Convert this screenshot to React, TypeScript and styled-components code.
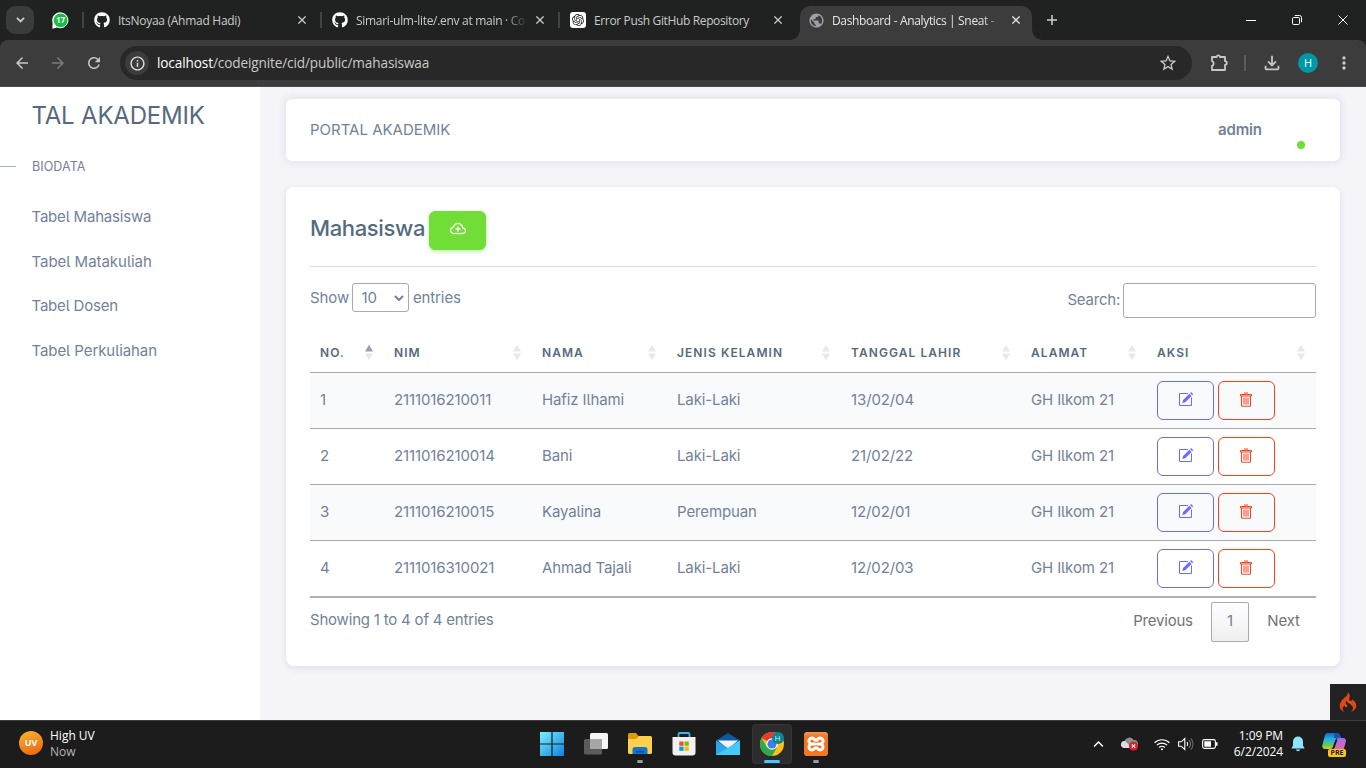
import React from "react";
import styled, { createGlobalStyle, css } from "styled-components";
import { FaGithub } from "react-icons/fa";
import { SiOpenai, SiCodeigniter } from "react-icons/si";
import {
  MdArrowBack,
  MdArrowForward,
  MdRefresh,
  MdInfoOutline,
  MdStarBorder,
  MdOutlineFileDownload,
  MdMoreVert,
  MdPublic,
} from "react-icons/md";
import { BsCloudPlus } from "react-icons/bs";

const pageFont = `Inter, "Liberation Sans", sans-serif`;
const systemFont = `"Open Sans", "Noto Sans", sans-serif`;

const GlobalStyle = createGlobalStyle`
  *, *::before, *::after { box-sizing: border-box; }
  body { margin: 0; overflow: hidden; background: #1c1c1c; }
`;

const Screen = styled.div`
  width: 1366px;
  height: 768px;
  display: flex;
  flex-direction: column;
  overflow: hidden;
`;

/* ---------- browser ---------- */

const TabStrip = styled.div`
  height: 40px;
  flex: none;
  display: flex;
  align-items: center;
  background: #202221;
  color: #c9cbca;
  font: 12px ${systemFont};
`;

const TabSearch = styled.div`
  width: 28px;
  height: 28px;
  margin-left: 6px;
  border-radius: 9px;
  background: #3a3b3b;
  display: flex;
  align-items: center;
  justify-content: center;
`;

const PinnedTab = styled.div`
  width: 48px;
  display: flex;
  justify-content: center;
  padding-left: 4px;
`;

const TabDivider = styled.i`
  width: 2px;
  height: 16px;
  background: #414342;
`;

const Tab = styled.div<{ $width: number; $active?: boolean }>`
  width: ${(p) => p.$width}px;
  height: 40px;
  display: flex;
  align-items: center;
  gap: 8px;
  padding: 0 14px 0 10px;
  svg { flex: none; }
  ${(p) =>
    p.$active &&
    css`
      position: relative;
      height: 34px;
      margin-top: 6px;
      padding: 0 12px 6px 8px;
      gap: 7px;
      border-radius: 10px 10px 0 0;
      background: #3c3c3c;
      color: #e6e6e6;
      &::before, &::after {
        content: "";
        position: absolute;
        bottom: 0;
        width: 10px;
        height: 10px;
      }
      &::before { left: -10px; background: radial-gradient(circle at 0 0, transparent 9.5px, #3c3c3c 10px); }
      &::after { right: -10px; background: radial-gradient(circle at 100% 0, transparent 9.5px, #3c3c3c 10px); }
    `}
`;

const TabTitle = styled.span<{ $spacing: number; $fade?: boolean }>`
  flex: 1;
  padding-top: 1px;
  white-space: nowrap;
  letter-spacing: ${(p) => p.$spacing}px;
  line-height: 20px;
  ${(p) => p.$fade && css`mask-image: linear-gradient(90deg, #000 calc(100% - 24px), transparent);`}
`;

const WhiteTile = styled.span`
  width: 16px;
  height: 16px;
  border-radius: 3px;
  background: #fff;
  color: #222;
  display: flex;
  align-items: center;
  justify-content: center;
  flex: none;
`;

const NewTab = styled.div`
  width: 40px;
  display: flex;
  justify-content: center;
`;

const WindowButtons = styled.div`
  margin-left: auto;
  display: flex;
  color: #fff;
`;

const WindowButton = styled.div`
  width: 46px;
  display: flex;
  justify-content: center;
`;

const ToolbarBack = styled.div`
  flex: none;
  background: #202221;
`;

const Toolbar = styled.div`
  height: 47px;
  display: flex;
  align-items: center;
  background: #3c3c3c;
  border-bottom: 1px solid #4a4a4a;
  border-radius: 8px 8px 0 0;
  color: #c7c7c7;
`;

const NavIcons = styled.div`
  width: 120px;
  padding-left: 13px;
  display: flex;
  gap: 18px;
`;

const DimIcon = styled.span`
  display: flex;
  color: #7a7a7a;
`;

const AddressBar = styled.div`
  width: 1072px;
  height: 34px;
  border-radius: 17px;
  background: #282828;
  padding: 0 14px 0 5px;
  display: flex;
  align-items: center;
`;

const SiteInfo = styled.div`
  width: 24px;
  height: 24px;
  border-radius: 12px;
  background: #3c3c3c;
  display: flex;
  align-items: center;
  justify-content: center;
  color: #dedede;
`;

const Url = styled.div`
  flex: 1;
  margin-left: 8px;
  padding-bottom: 1px;
  font: 13.6px ${systemFont};
  letter-spacing: -0.12px;
  color: #c9c9c9;
  b { font-weight: 400; color: #fff; }
`;

const ToolbarActions = styled.div`
  flex: 1;
  display: flex;
  align-items: center;
  padding-left: 17px;
`;

const ToolbarDivider = styled.i`
  width: 2px;
  height: 16px;
  margin: 0 15px 0 15px;
  background: #5c5c5c;
`;

const Avatar = styled.div`
  width: 20px;
  height: 20px;
  margin: 0 16px 0 15px;
  border-radius: 50%;
  background: #0097a7;
  color: #fff;
  font: 11px/20px ${systemFont};
  text-align: center;
`;

/* ---------- page ---------- */

const Page = styled.div`
  position: relative;
  height: 633px;
  flex: none;
  display: flex;
  overflow: hidden;
  background: #f4f4f9;
  font-family: ${pageFont};
  font-size: 15px;
  font-feature-settings: "cv05";
  letter-spacing: -0.1px;
  color: #71829a;
`;

const Sidebar = styled.aside`
  width: 260px;
  background: #fff;
  display: flex;
  flex-direction: column;
`;

const Brand = styled.div`
  margin: 14px 0 0 31.5px;
  height: 30px;
  white-space: nowrap;
  font-size: 24px;
  line-height: 30px;
  letter-spacing: -0.2px;
  color: #566a7f;
`;

const MenuHeader = styled.div`
  height: 20px;
  margin: 25px 0 29px;
  display: flex;
  align-items: center;
  gap: 16px;
  font-size: 12.5px;
  letter-spacing: 0.08px;
  &::before {
    content: "";
    width: 16px;
    height: 1px;
    background: #a3afbb;
  }
`;

const MenuItem = styled.a<{ $spacing: number }>`
  height: 44.6px;
  padding-left: 31.5px;
  line-height: 24px;
  letter-spacing: ${(p) => p.$spacing}px;
  &:nth-of-type(2) { line-height: 23px; }
`;

const Main = styled.main`
  flex: 1;
  padding: 12px 26px 0;
  display: flex;
  flex-direction: column;
  gap: 26px;
`;

const Navbar = styled.header`
  height: 62px;
  padding: 0 24px 2px;
  border-radius: 6px;
  background: #fff;
  box-shadow: 0 0 6px 3px rgba(67, 89, 113, 0.07);
  display: flex;
  align-items: center;
  justify-content: space-between;
  letter-spacing: 0;
`;

const User = styled.div`
  position: relative;
  width: 98px;
  font-weight: 600;
  letter-spacing: -0.15px;
  &::after {
    content: "";
    position: absolute;
    left: 79px;
    top: 21px;
    width: 8px;
    height: 8px;
    border-radius: 50%;
    background: #71dd37;
  }
`;

const Card = styled.section`
  height: 479px;
  padding: 24px;
  border-radius: 8px;
  background: #fff;
  box-shadow: 0 2px 6px rgba(67, 89, 113, 0.12);
`;

const CardTitle = styled.div`
  height: 56px;
  display: flex;
  align-items: flex-start;
  gap: 5px;
  border-bottom: 1px solid #d4dbe1;
`;

const Heading = styled.h4`
  width: 114px;
  margin: 0;
  font-size: 22px;
  font-weight: 450;
  line-height: 35px;
  letter-spacing: -0.36px;
  color: #566a7f;
`;

const Button = styled.button<{ $tone: "success" | "primary" | "danger" }>`
  width: 57px;
  height: 39px;
  padding: 0 0 3px;
  display: flex;
  align-items: center;
  justify-content: center;
  border-radius: 6px;
  border: 1px solid;
  background: transparent;
  ${(p) => p.$tone === "success" && css`background: #71dd37; border-color: #71dd37; color: #fff; box-shadow: 0 2px 4px rgba(113, 221, 55, 0.4);`}
  ${(p) => p.$tone === "primary" && css`color: #696cff;`}
  ${(p) => p.$tone === "danger" && css`color: #ff3e1d;`}
`;

const Controls = styled.div`
  height: 66px;
  padding-top: 16px;
  display: flex;
  justify-content: space-between;
`;

const ControlLabel = styled.label<{ $gap: number; $height: number }>`
  height: ${(p) => p.$height}px;
  display: flex;
  align-items: center;
  gap: ${(p) => p.$gap}px;
`;

const SearchText = styled.span`
  padding-bottom: 2px;
  letter-spacing: -0.22px;
`;

const LengthSelect = styled.span`
  width: 57px;
  height: 29px;
  padding: 0 4px 0 8px;
  border: 1px solid #aaa;
  border-radius: 3px;
  display: flex;
  align-items: center;
  justify-content: space-between;
`;

const SearchInput = styled.input`
  width: 193px;
  height: 35px;
  border: 1px solid #aaa;
  border-radius: 3px;
  background: transparent;
`;

const Table = styled.table`
  width: 1006px;
  table-layout: fixed;
  border-collapse: separate;
  border-spacing: 0;
  border-bottom: 2px solid #b0b0b0;
`;

const HeadCell = styled.th`
  height: 40px;
  padding: 0 10px;
  border-bottom: 1px solid #aaa;
  text-align: left;
  font-size: 12px;
  font-weight: 600;
  letter-spacing: 1.07px;
  color: #566a7f;
`;

const HeadContent = styled.div`
  display: flex;
  align-items: center;
  justify-content: space-between;
`;

const BodyRow = styled.tr`
  &:nth-child(odd) { background: #f9fafc; }
  &:not(:last-child) td { height: 56px; border-bottom: 1px solid #aaa; }
`;

const Cell = styled.td`
  height: 55px;
  padding: 0 10px 2px;
  letter-spacing: -0.12px;
  white-space: nowrap;
`;

const ActionCell = styled(Cell)`
  padding: 0 10px;
`;

const Actions = styled.div`
  display: flex;
  gap: 4px;
`;

const TableFooter = styled.div`
  height: 44px;
  padding-top: 4px;
  display: flex;
  justify-content: space-between;
  line-height: 36px;
  letter-spacing: -0.2px;
`;

const Pager = styled.div`
  display: flex;
  line-height: 38px;
  color: #737373;
`;

const PageLink = styled.a<{ $current?: boolean; $width: number }>`
  width: ${(p) => p.$width}px;
  height: 40px;
  text-align: center;
  &:last-child { padding-left: 2px; }
  ${(p) =>
    p.$current &&
    css`
      border: 1px solid #aaa;
      border-radius: 2px;
      line-height: 36px;
      color: #71829a;
      background: linear-gradient(#fff, #eee);
    `}
`;

const DebugBadge = styled.div`
  position: absolute;
  right: 0;
  bottom: 0;
  width: 36px;
  height: 36px;
  background: #222;
  color: #dd4814;
  display: flex;
  align-items: center;
  justify-content: center;
`;

/* ---------- taskbar ---------- */

const Taskbar = styled.footer`
  height: 48px;
  flex: none;
  display: flex;
  align-items: center;
  padding-bottom: 1px;
  background: #1c1c1c;
  border-top: 1px solid #3c3c3c;
  color: #fff;
  font: 12px/16px ${systemFont};
`;

const Weather = styled.div`
  width: 528px;
  padding-left: 19px;
  display: flex;
  align-items: center;
  gap: 7px;
  small { display: block; font-size: 12px; color: #b5b5b5; }
`;

const UvBadge = styled.div`
  width: 24px;
  height: 24px;
  margin-bottom: 2px;
  border-radius: 50%;
  background: linear-gradient(160deg, #f6b52c, #ee5f10);
  font: 700 9px/24px ${systemFont};
  text-align: center;
`;

const AppSlot = styled.div<{ $active?: boolean; $running?: boolean }>`
  position: relative;
  width: 40px;
  height: 40px;
  margin: 0 2px;
  border-radius: 4px;
  display: flex;
  align-items: center;
  justify-content: center;
  ${(p) => p.$active && css`background: #2c2c2c; box-shadow: inset 0 0 0 1px #333;`}
  ${(p) =>
    (p.$active || p.$running) &&
    css`
      &::after {
        content: "";
        position: absolute;
        bottom: 1px;
        width: ${p.$active ? 16 : 6}px;
        height: 3px;
        border-radius: 2px;
        background: ${p.$active ? "#4cc2ff" : "#9a9a9a"};
      }
    `}
`;

const Apps = styled.div`
  display: flex;
  margin-left: 1.5px;
`;

const ChromeUser = styled.span`
  position: absolute;
  right: 8px;
  top: 8px;
  width: 12px;
  height: 12px;
  border-radius: 50%;
  background: #0a8794;
  color: #d8f2f4;
  font: 8px/12px ${systemFont};
  text-align: center;
`;

const XamppTile = styled.span`
  width: 24px;
  height: 24px;
  border-radius: 3px;
  background: linear-gradient(#f59a5c, #f37623 4px);
  display: flex;
  align-items: center;
  justify-content: center;
`;

const Tray = styled.div`
  margin-left: auto;
  display: flex;
  align-items: center;
`;

const TrayItem = styled.span<{ $width: number }>`
  width: ${(p) => p.$width}px;
  display: flex;
  justify-content: center;
`;

const Clock = styled.div`
  width: 58px;
  padding-right: 1px;
  text-align: right;
  letter-spacing: -0.1px;
`;

const CopilotIcon = styled.span`
  position: relative;
  width: 24px;
  height: 24px;
  margin: 0 20px 0 10px;
`;

const PreBadge = styled.b`
  position: absolute;
  left: 6px;
  bottom: -1px;
  width: 18px;
  height: 8px;
  border-radius: 2px;
  background: #fdc70c;
  color: #222;
  font: 700 7px/8px ${systemFont};
  text-align: center;
`;

/* ---------- drawings ---------- */

const Chevron = ({ up, width = 10, stroke = 1.8 }: { up?: boolean; width?: number; stroke?: number }) => (
  <svg width={width} height={width * 0.6} viewBox="0 0 10 6" fill="none" stroke="currentColor" strokeWidth={stroke}>
    <path d={up ? "M1 5l4-4 4 4" : "M1 1l4 4 4-4"} />
  </svg>
);

const Cross = ({ size = 8, stroke = 1.6 }: { size?: number; stroke?: number }) => (
  <svg width={size} height={size} viewBox="0 0 10 10" fill="none" stroke="currentColor" strokeWidth={stroke}>
    <path d="M.5.5l9 9M9.5.5l-9 9" />
  </svg>
);

const ChatIcon = () => (
  <svg width="17" height="17" viewBox="0 0 17 17">
    <path d="M8.7.3a8 8 0 1 1-3.8 15.2L.4 16.7l.2-6A8 8 0 0 1 8.7.3z" fill="#fff" />
    <circle cx="8.6" cy="8.3" r="6.9" fill="#12c245" />
    <text x="8.5" y="11.3" fontSize="8" fontWeight="700" fontFamily="Open Sans" fill="#fff" textAnchor="middle">17</text>
  </svg>
);

const PuzzleIcon = () => (
  <svg width="20" height="20" viewBox="0 0 20 20" fill="none" stroke="currentColor" strokeWidth="1.8" strokeLinejoin="round">
    <path d="M3 4h4.600a1.700 1.700 0 0 1 3.400 0H16v4.200a1.800 1.800 0 0 1 0 3.600V17H3v-4.200a2.400 2.400 0 0 0 0-4.600z" />
  </svg>
);

const EditIcon = () => (
  <svg width="16" height="16" viewBox="0 0 16 16" fill="none" stroke="currentColor">
    <path d="M10 2.500H1.500v12H13.500V6.500" strokeWidth="1" />
    <path d="M4.300 12l.8-3 6.300-6.300 2.200 2.200L7.300 11.200z" fill="currentColor" stroke="none" />
    <path d="M12 2.100l1-1 2.200 2.200-1 1z" fill="currentColor" stroke="none" />
  </svg>
);

const TrashIcon = () => (
  <svg width="15" height="15" viewBox="0 0 15 15" fill="none" stroke="currentColor" strokeWidth="1">
    <path d="M1.500 2.500h11v1.500h-11zM5 1h4M2.500 4v10.200h9V4M5 5.500v7M7 5.500v7M9 5.500v7" />
  </svg>
);

const SortIcon = ({ ascending }: { ascending?: boolean }) => (
  <svg width="10" height="17" viewBox="0 0 10 17">
    <path d="M1 7.500L5 .8l4 6.700z" fill={ascending ? "#93a0ae" : "#e6e8ec"} />
    <path d="M1 9.500l4 6.700 4-6.700z" fill="#e6e8ec" />
  </svg>
);

const WindowsIcon = () => (
  <svg width="24" height="24" viewBox="0 0 24 24">
    <defs>
      <linearGradient id="win" x1="0" y1="0" x2="1" y2="1">
        <stop offset="0" stopColor="#7ceefc" />
        <stop offset="1" stopColor="#0a84e0" />
      </linearGradient>
    </defs>
    <path d="M0 0h11.400v11.400H0zM12.600 0H24v11.400H12.600zM0 12.600h11.400V24H0zM12.600 12.600H24V24H12.600z" fill="url(#win)" />
  </svg>
);

const TaskViewIcon = () => (
  <svg width="24" height="24" viewBox="0 0 24 24">
    <rect x="6" y="1" width="18" height="16" rx="1.500" fill="#f4f4f4" />
    <rect x="0" y="7" width="18" height="15.500" rx="1.500" fill="#5c5c5c" />
    <path d="M6 7h12v10H6z" fill="#a6a6a6" />
  </svg>
);

const FolderIcon = () => (
  <svg width="24" height="24" viewBox="0 0 24 24">
    <path d="M0 2.500A1.500 1.500 0 0 1 1.500 1H8l2.500 3H22v8H0z" fill="#dc9a0c" />
    <path d="M0 7h8l3-3h11.500A1.500 1.500 0 0 1 24 5.500v15a1.500 1.500 0 0 1-1.500 1.500h-21A1.500 1.500 0 0 1 0 20.500z" fill="#fccf4d" />
    <path d="M4.500 22v-4.500a2.500 2.500 0 0 1 2.500-2.500h10a2.500 2.500 0 0 1 2.500 2.500V22z" fill="#1275cc" />
    <path d="M8 19h8v1.500H8z" fill="#0a4f94" />
  </svg>
);

const StoreIcon = () => (
  <svg width="24" height="24" viewBox="0 0 24 24">
    <path d="M6.500 6V2.200A1.200 1.200 0 0 1 7.700 1h8.600a1.200 1.200 0 0 1 1.200 1.200V6" fill="none" stroke="#35b5e8" strokeWidth="1.800" />
    <path d="M.5 5h23v15.500A3 3 0 0 1 20.500 23.500h-17A3 3 0 0 1 .5 20.500z" fill="#f1f1f1" />
    <path d="M7.300 9.500h4.300v4.300H7.300z" fill="#f25022" />
    <path d="M12.500 9.500h4.300v4.300h-4.300z" fill="#7fba00" />
    <path d="M7.300 14.600h4.300v4.300H7.300z" fill="#00a4ef" />
    <path d="M12.500 14.600h4.300v4.300h-4.300z" fill="#ffb900" />
  </svg>
);

const MailIcon = () => (
  <svg width="24" height="24" viewBox="0 0 24 24">
    <path d="M0 8.500L12 1l12 7.500v5H0z" fill="#0c59a4" />
    <path d="M2 8.500h20L12 17z" fill="#f3f3f3" />
    <path d="M0 8.500L12 16l12-7.500V23H0z" fill="#2aa8ea" />
    <path d="M24 8.500V23H0z" fill="#46c8f8" />
  </svg>
);

const ChromeIcon = () => (
  <svg width="24" height="24" viewBox="0 0 24 24">
    <circle cx="12" cy="12" r="12" fill="#fbc116" />
    <path d="M12 12L1.600 6A12 12 0 0 1 22.400 6z" fill="#e33b2e" />
    <path d="M1.600 6A12 12 0 0 0 12 24l5.200-9L6.800 15z" fill="#2da94f" />
    <path d="M12 6h10.400L12 12z" fill="#e33b2e" />
    <circle cx="12" cy="12" r="5.800" fill="#fff" />
    <circle cx="12" cy="12" r="4.600" fill="#3f7de8" />
  </svg>
);

const XamppMark = () => (
  <svg width="20" height="18" viewBox="0 0 20 18" fill="none" stroke="#fff" strokeWidth="3" strokeLinejoin="round" strokeLinecap="round">
    <path d="M9 9H5.500a3 3 0 1 1 3-4.500c.5 1 2.500 1 3 0a3 3 0 1 1 3 4.500 3 3 0 1 1-3 4.500c-.5-1-2.500-1-3 0a3 3 0 1 1-3-4.500M11.500 9h3" />
  </svg>
);

const CloudErrorIcon = () => (
  <svg width="18" height="14" viewBox="0 0 18 14">
    <path d="M4 11a3.600 3.600 0 0 1-.5-7A5 5 0 0 1 12.500 3a4 4 0 0 1 1 8z" fill="#8f8f8f" />
    <path d="M3 11a3.500 3.500 0 0 1 1-7l7 7z" fill="#dedede" />
    <circle cx="12.500" cy="9" r="4.600" fill="#d9222f" />
    <path d="M10.800 7.300l3.400 3.400M14.200 7.300l-3.400 3.400" stroke="#fff" strokeWidth="1.100" />
  </svg>
);

const WifiIcon = () => (
  <svg width="16" height="13" viewBox="0 0 16 13" fill="none" stroke="#fff" strokeWidth="1.200">
    <path d="M.6 4.800a10.500 10.500 0 0 1 14.800 0M2.900 7.200a7.200 7.200 0 0 1 10.200 0M5.200 9.500a4 4 0 0 1 5.600 0" />
    <circle cx="8" cy="11.200" r="1" fill="#fff" stroke="none" />
  </svg>
);

const VolumeIcon = () => (
  <svg width="16" height="14" viewBox="0 0 16 14" fill="none" stroke="#fff" strokeWidth="1.100">
    <path d="M.6 4.800h2.600l3.600-3.300v11L3.200 9.200H.6zM9 5a3.500 3.500 0 0 1 0 4" />
    <path d="M11 3.200a6 6 0 0 1 0 7.600M13 1.500a9 9 0 0 1 0 11" stroke="#777" />
  </svg>
);

const BatteryIcon = () => (
  <svg width="16" height="10" viewBox="0 0 16 10">
    <rect x=".6" y=".6" width="12.800" height="8.800" rx="1.800" fill="none" stroke="#fff" strokeWidth="1.100" />
    <path d="M2.300 2.300h6.700v5.400H2.300zM14 3.300h1.500v3.400H14z" fill="#fff" />
  </svg>
);

const BellIcon = () => (
  <svg width="14" height="16" viewBox="0 0 14 16" fill="#8fe3fb">
    <path d="M7 .5a5 5 0 0 0-5 5v4L.4 12.500h13.200L12 9.500v-4a5 5 0 0 0-5-5zM4.800 13.500a2.300 2.300 0 0 0 4.400 0z" />
  </svg>
);

const CopilotMark = () => (
  <svg width="24" height="24" viewBox="0 0 24 24">
    <defs>
      <linearGradient id="copA" x1="0" y1="0" x2="0" y2="1">
        <stop offset="0" stopColor="#1267c8" />
        <stop offset=".4" stopColor="#26b3e6" />
        <stop offset=".75" stopColor="#5fc95d" />
        <stop offset="1" stopColor="#e8c520" />
      </linearGradient>
      <linearGradient id="copB" x1="0" y1="0" x2="0" y2="1">
        <stop offset="0" stopColor="#a56bf0" />
        <stop offset="1" stopColor="#f0679a" />
      </linearGradient>
    </defs>
    <path d="M6 1h9a3 3 0 0 1 2.800 2L19 6h-4.500l-3.500 9a3 3 0 0 1-3 2H3a3 3 0 0 1-2.600-4L3 3a3 3 0 0 1 3-2z" fill="url(#copA)" />
    <path d="M12 1h3a3 3 0 0 1 2.800 2L19 6h-7z" fill="#1554b8" />
    <path d="M16 6h5a3 3 0 0 1 2.800 4l-2.300 8a3 3 0 0 1-3 2H11l3.200-12A2.500 2.500 0 0 1 16 6z" fill="url(#copB)" />
    <path d="M13.500 7.500h2L12.500 16h-2z" fill="#1c1c1c" />
  </svg>
);

/* ---------- data ---------- */

const menu = [
  { label: "Tabel Mahasiswa", spacing: -0.2 },
  { label: "Tabel Matakuliah", spacing: -0.03 },
  { label: "Tabel Dosen", spacing: -0.2 },
  { label: "Tabel Perkuliahan", spacing: -0.08 },
];

const columns = [
  { label: "No.", width: 74 },
  { label: "NIM", width: 148 },
  { label: "Nama", width: 135 },
  { label: "Jenis Kelamin", width: 174 },
  { label: "Tanggal Lahir", width: 180 },
  { label: "Alamat", width: 126 },
  { label: "Aksi", width: 169 },
];

const students = [
  ["2111016210011", "Hafiz Ilhami", "Laki-Laki", "13/02/04", "GH Ilkom 21"],
  ["2111016210014", "Bani", "Laki-Laki", "21/02/22", "GH Ilkom 21"],
  ["2111016210015", "Kayalina", "Perempuan", "12/02/01", "GH Ilkom 21"],
  ["2111016310021", "Ahmad Tajali", "Laki-Laki", "12/02/03", "GH Ilkom 21"],
];

export default function App() {
  return (
    <Screen>
      <GlobalStyle />
      <TabStrip>
        <TabSearch><Chevron width={9} stroke={2} /></TabSearch>
        <PinnedTab><ChatIcon /></PinnedTab>
        <TabDivider />
        <Tab $width={236}>
          <FaGithub size={16} color="#fff" />
          <TabTitle $spacing={-0.28}>ItsNoyaa (Ahmad Hadi)</TabTitle>
          <Cross />
        </Tab>
        <TabDivider />
        <Tab $width={236}>
          <FaGithub size={16} color="#fff" />
          <TabTitle $spacing={-0.3} $fade>Simari-ulm-lite/.env at main · Co</TabTitle>
          <Cross />
        </Tab>
        <TabDivider />
        <Tab $width={236}>
          <WhiteTile><SiOpenai size={12} /></WhiteTile>
          <TabTitle $spacing={-0.36}>Error Push GitHub Repository</TabTitle>
          <Cross />
        </Tab>
        <TabDivider style={{ visibility: "hidden", width: 4 }} />
        <Tab $width={232} $active>
          <MdPublic size={17} color="#9aa0a6" />
          <TabTitle $spacing={-0.34} $fade>Dashboard - Analytics | Sneat -</TabTitle>
          <Cross />
        </Tab>
        <NewTab>
          <svg width="10" height="10" viewBox="0 0 10 10" stroke="#d0d0d0" strokeWidth="1.500"><path d="M5 0v10M0 5h10" /></svg>
        </NewTab>
        <WindowButtons>
          <WindowButton><svg width="10" height="10" viewBox="0 0 10 10" stroke="#fff"><path d="M0 5.500h10" /></svg></WindowButton>
          <WindowButton>
            <svg width="10" height="10" viewBox="0 0 10 10" stroke="#fff" fill="none">
              <rect x=".5" y="2.500" width="7" height="7" rx="1.200" />
              <path d="M2.800.5h4.700a2 2 0 0 1 2 2v4.700" />
            </svg>
          </WindowButton>
          <WindowButton><Cross size={10} stroke={1} /></WindowButton>
        </WindowButtons>
      </TabStrip>
      <ToolbarBack>
        <Toolbar>
          <NavIcons>
            <MdArrowBack size={18} />
            <DimIcon><MdArrowForward size={18} /></DimIcon>
            <MdRefresh size={18} />
          </NavIcons>
          <AddressBar>
            <SiteInfo><MdInfoOutline size={17} /></SiteInfo>
            <Url><b>localhost</b>/codeignite/cid/public/mahasiswaa</Url>
            <MdStarBorder size={20} />
          </AddressBar>
          <ToolbarActions>
            <PuzzleIcon />
            <ToolbarDivider />
            <MdOutlineFileDownload size={22} />
            <Avatar>H</Avatar>
            <MdMoreVert size={20} />
          </ToolbarActions>
        </Toolbar>
      </ToolbarBack>

      <Page>
        <Sidebar>
          <Brand>TAL AKADEMIK</Brand>
          <MenuHeader>BIODATA</MenuHeader>
          {menu.map((item) => (
            <MenuItem key={item.label} $spacing={item.spacing}>{item.label}</MenuItem>
          ))}
        </Sidebar>
        <Main>
          <Navbar>
            <span>PORTAL AKADEMIK</span>
            <User>admin</User>
          </Navbar>
          <Card>
            <CardTitle>
              <Heading>Mahasiswa</Heading>
              <Button $tone="success"><BsCloudPlus size={16} strokeWidth={0.3} /></Button>
            </CardTitle>
            <Controls>
              <ControlLabel $gap={3.4} $height={29}>
                Show
                <LengthSelect>10<Chevron width={10} stroke={2} /></LengthSelect>
                entries
              </ControlLabel>
              <ControlLabel $gap={3} $height={35}>
                <SearchText>Search:</SearchText>
                <SearchInput />
              </ControlLabel>
            </Controls>
            <Table>
              <colgroup>
                {columns.map((c) => <col key={c.label} width={c.width} />)}
              </colgroup>
              <thead>
                <tr>
                  {columns.map((c, i) => (
                    <HeadCell key={c.label}>
                      <HeadContent>{c.label.toUpperCase()}<SortIcon ascending={i === 0} /></HeadContent>
                    </HeadCell>
                  ))}
                </tr>
              </thead>
              <tbody>
                {students.map((row, i) => (
                  <BodyRow key={row[0]}>
                    <Cell>{i + 1}</Cell>
                    {row.map((value) => <Cell key={value}>{value}</Cell>)}
                    <ActionCell>
                      <Actions>
                        <Button $tone="primary"><EditIcon /></Button>
                        <Button $tone="danger"><TrashIcon /></Button>
                      </Actions>
                    </ActionCell>
                  </BodyRow>
                ))}
              </tbody>
            </Table>
            <TableFooter>
              <span>Showing 1 to 4 of 4 entries</span>
              <Pager>
                <PageLink $width={96}>Previous</PageLink>
                <PageLink $width={38} $current>1</PageLink>
                <PageLink $width={67}>Next</PageLink>
              </Pager>
            </TableFooter>
          </Card>
        </Main>
        <DebugBadge><SiCodeigniter size={20} /></DebugBadge>
      </Page>

      <Taskbar>
        <Weather>
          <UvBadge>UV</UvBadge>
          <div>High UV<small>Now</small></div>
        </Weather>
        <Apps>
          <AppSlot><WindowsIcon /></AppSlot>
          <AppSlot><TaskViewIcon /></AppSlot>
          <AppSlot $running><FolderIcon /></AppSlot>
          <AppSlot><StoreIcon /></AppSlot>
          <AppSlot><MailIcon /></AppSlot>
          <AppSlot $active><ChromeIcon /><ChromeUser>H</ChromeUser></AppSlot>
          <AppSlot $running><XamppTile><XamppMark /></XamppTile></AppSlot>
        </Apps>
        <Tray>
          <TrayItem $width={32}><Chevron up width={11} stroke={1.3} /></TrayItem>
          <TrayItem $width={32}><CloudErrorIcon /></TrayItem>
          <TrayItem $width={32}><WifiIcon /></TrayItem>
          <TrayItem $width={16}><VolumeIcon /></TrayItem>
          <TrayItem $width={32}><BatteryIcon /></TrayItem>
          <Clock>1:09 PM<br />6/2/2024</Clock>
          <TrayItem $width={28}><BellIcon /></TrayItem>
          <CopilotIcon><CopilotMark /><PreBadge>PRE</PreBadge></CopilotIcon>
        </Tray>
      </Taskbar>
    </Screen>
  );
}
